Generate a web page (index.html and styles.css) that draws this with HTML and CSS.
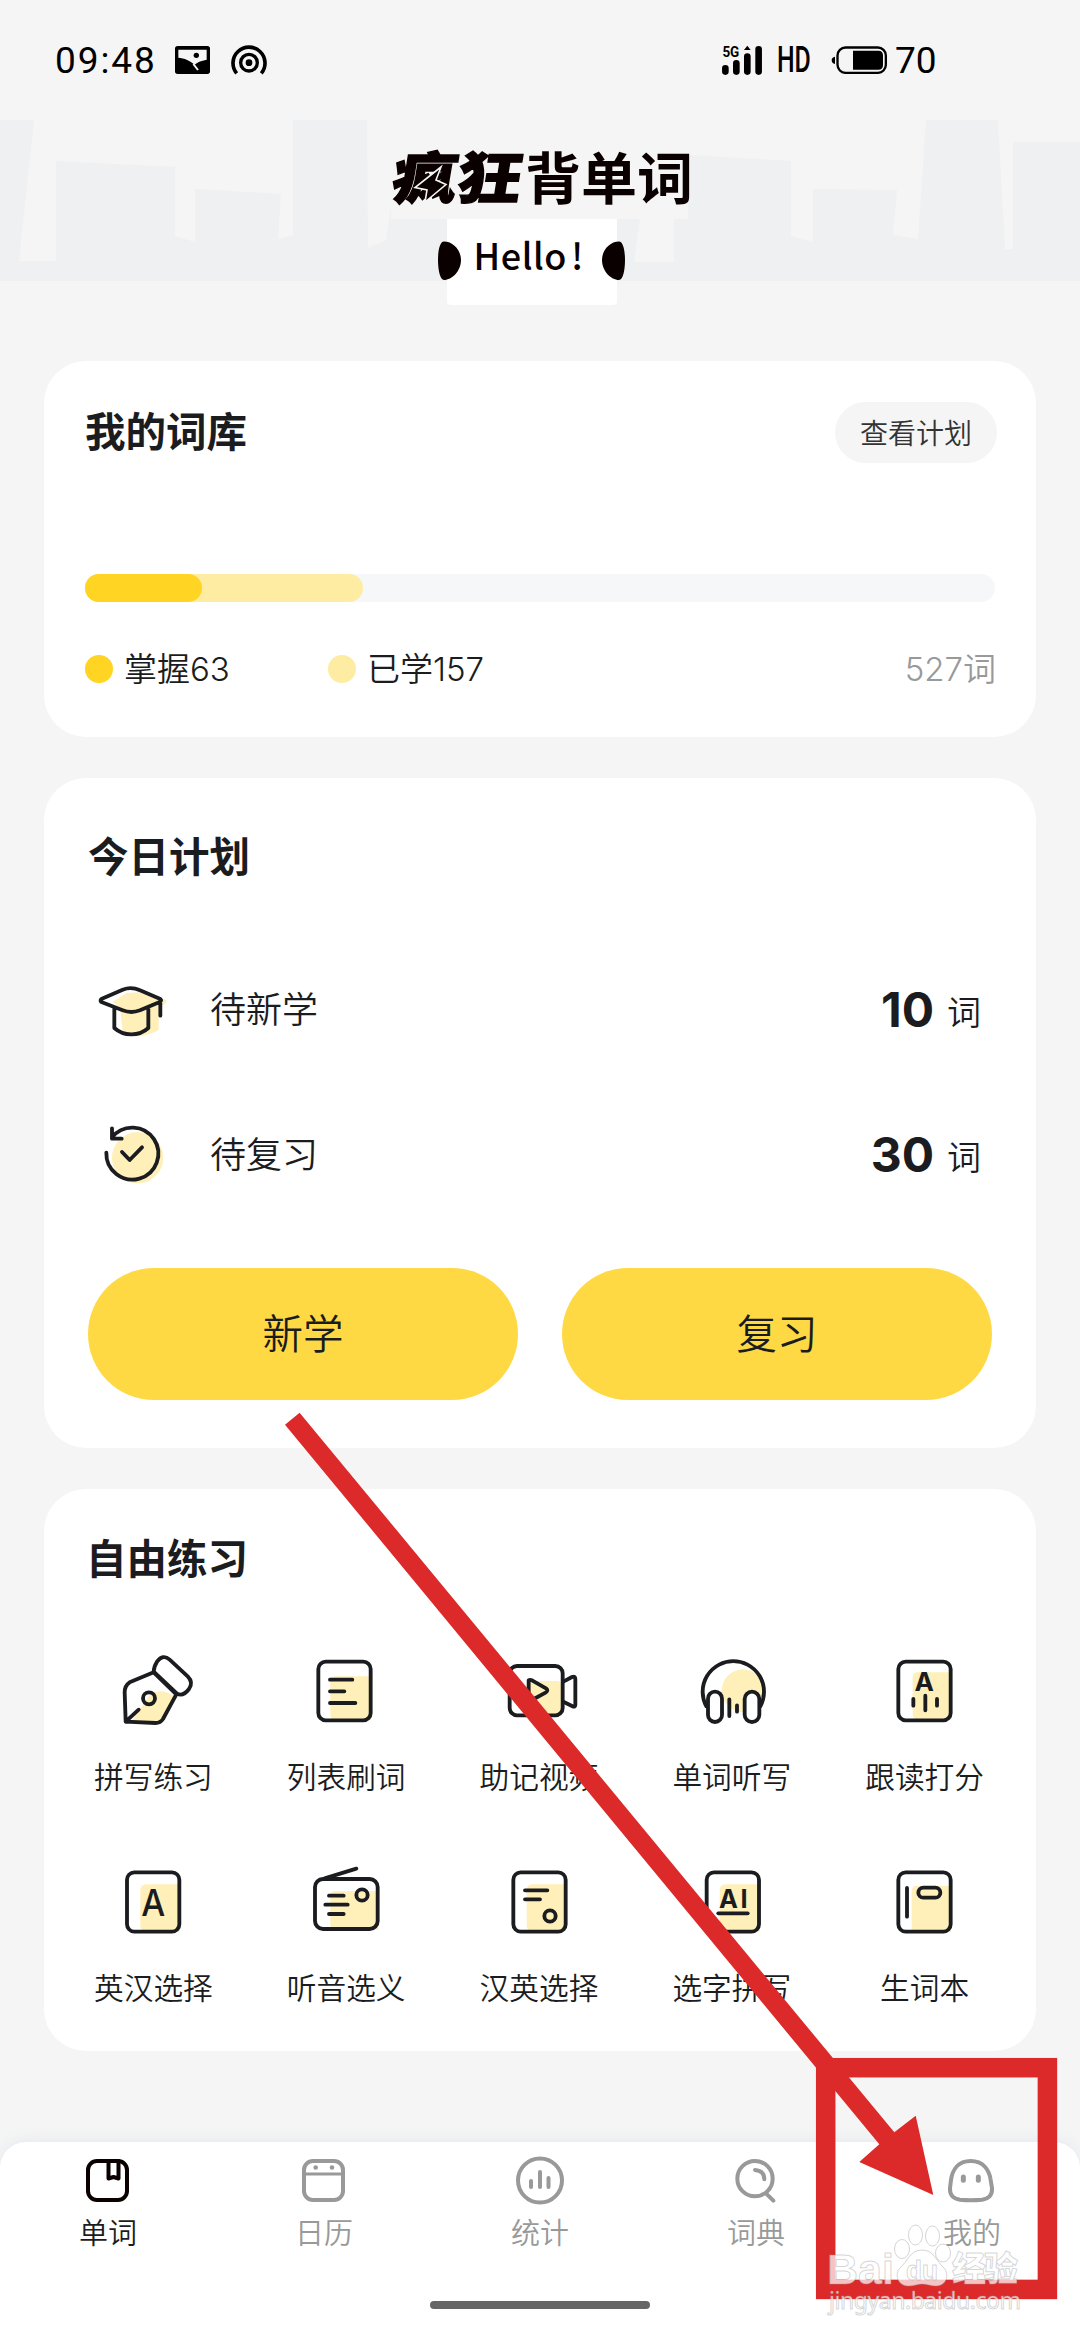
FILE: index.html
```html
<!DOCTYPE html>
<html lang="zh-CN">
<head>
<meta charset="utf-8">
<title>疯狂背单词</title>
<link rel="stylesheet" href="styles.css">
</head>
<body>
<div class="screen">
  <div class="status">
    <span class="clock">09:48</span>
    <svg class="st-image" viewBox="405 78 105 84" width="35" height="28"><path fill-rule="evenodd" d="M413 78H502Q510 78 510 86V154Q510 162 502 162H413Q405 162 405 154V86Q405 78 413 78ZM415 89V113C432 113 452 124 464 134Q474 124 500 119V89Z"/><circle cx="469" cy="106" r="8"/><path d="M460 132L474 150" stroke="#f5f5f5" stroke-width="6"/></svg>
    <svg class="st-cast" viewBox="570 70 114 96" width="38" height="32" fill="none" stroke="#000"><circle cx="627" cy="126" r="10" fill="#000" stroke="none"/><circle cx="627" cy="126" r="25" stroke-width="10"/><path d="M590 158A48 48 0 1 1 664 158" stroke-width="11"/></svg>
    <span class="spacer"></span>
    <svg class="st-signal" viewBox="60 72 126 92" width="42" height="30.600"><text x="64" y="107" class="five" textLength="51" lengthAdjust="spacingAndGlyphs">5G</text><path d="M73 142V152M106 127V152M139 107V152M173 85V152" stroke="#000" stroke-width="20" stroke-linecap="round"/><path d="M139 74L149 87H129Z"/></svg>
    <span class="hd">HD</span>
    <svg class="st-batt" viewBox="384 76 170 86" width="56.700" height="28.700"><rect x="403.500" y="80.500" width="145" height="76" rx="24" fill="none" stroke="#000" stroke-width="7"/><path d="M450 90H526Q540 90 540 104V133Q540 147 526 147H450ZM396 108V130Q386 128 386 119Q386 110 396 108Z"/></svg>
    <span class="pct">70</span>
  </div>

  <svg class="hero" viewBox="0 120 1080 241" width="1080" height="241">
    <g fill="#eff0f2">
      <path d="M0 120H34L19 261H56V161L175 167V236L195 242V189L281 194L278 239L293 235V120H367L368 248L386 240L395 180H688V155L791 161V236L813 242V189L897 190L893 235L918 239L926 120H998L1005 249H1013V142H1080V281H0Z"/>
    </g>
    <path d="M391 130H688V219H391ZM640 219H674V262H634Z" fill="#f5f5f5"/>
    <path d="M447 219H617V301Q617 305 613 305H451Q447 305 447 301Z" fill="#fff"/>
    <path d="M444 241.500C453 241.500 461 250 461 260C461 271 452 280 444 280C440 280 438 270 438 260C438 250 440 241.500 444 241.500ZM619 241.500C610 241.500 602 250 602 260C602 271 611 280 619 280C623 280 625 270 625 260C625 250 623 241.500 619 241.500Z" fill="#0b0000"/>
    <g transform="translate(390 199) skewX(-9)"><text class="logo-heavy" transform="scale(1 .87)" x="0" y="0" textLength="129" lengthAdjust="spacingAndGlyphs">疯狂</text></g>
    <path d="M441 167L415 187.500L427 190L425 202L446 184.500L436 180Z" fill="#0b0000" stroke="#f5f5f5" stroke-width="1.600"/>
    <text class="logo-rest" x="525" y="199" textLength="168">背单词</text>
    <text class="hello" x="473.500" y="270" textLength="93">Hello</text><text class="hello" x="571" y="270">!</text>
  </svg>

  <main class="cards">
    <section class="card library">
      <div class="head"><h2>我的词库</h2><span class="pill">查看计划</span></div>
      <div class="track"><div class="learned"></div><div class="mastered"></div></div>
      <div class="legend">
        <span class="item first"><i class="dot strong"></i>掌握63</span>
        <span class="item"><i class="dot"></i>已学157</span>
        <span class="total">527词</span>
      </div>
    </section>

    <section class="card today">
      <h2>今日计划</h2>
      <div class="plan">
        <svg viewBox="0 27 240 180" width="80" height="60" class="ic"><path class="y" d="M90 110L68 92L110 66L150 64L204 86Q228 80 230 92Q224 104 206 102V176Q184 192 142 196L98 180Z"/><path d="M34 84Q30 88 34 93L98 118Q124 128 150 118L211 92Q215 88 211 84L150 58Q124 46 98 56ZM73 110V171Q94 190 124 190Q154 190 175 171V110M211 90V134"/></svg>
        <span class="name">待新学</span><span class="num">10</span><span class="unit">词</span>
      </div>
      <div class="plan">
        <svg viewBox="0 462 240 180" width="80" height="60" class="ic"><circle class="y" cx="143" cy="560" r="77"/><path d="M49 545A78 78 0 1 0 66 499M66 472V503H95M96 543L119 567L156 529"/></svg>
        <span class="name">待复习</span><span class="num">30</span><span class="unit">词</span>
      </div>
      <div class="buttons"><span class="btn">新学</span><span class="btn">复习</span></div>
    </section>

    <section class="card practice">
      <h2>自由练习</h2>
      <div class="grid">
        <div class="cell"><svg class="ic" viewBox="100 60 240 240"><path class="y" d="M160 264L215 186Q250 174 272 190L288 196L245 270L232 275L150 274Z"/><path d="M222 124L150 154Q135 164 135 184L138 272L228 276Q242 276 250 264L290 190M138 272L177 236M222 124L290 190M222 122Q222 108 232 92Q250 68 270 86L324 136Q342 154 328 174Q310 198 292 188L222 122"/><circle cx="208" cy="202" r="18"/></svg><span>拼写练习</span></div>
        <div class="cell"><svg class="ic" viewBox="679 60 240 240"><path class="y" d="M752 152Q752 136 768 136H874V268H768Q752 268 752 250Z"/><rect x="716" y="92" width="157" height="176" rx="22"/><path d="M751 146H818M751 181H794M751 216H827"/></svg><span>列表刷词</span></div>
        <div class="cell"><svg class="ic" viewBox="1257 60 240 240"><path class="y" d="M1340 165Q1340 150 1356 150H1430Q1445 150 1445 165V254H1356Q1340 254 1340 240Z"/><rect x="1289" y="105" width="159" height="148" rx="22"/><path d="M1346 148Q1350 145 1356 148L1398 172Q1406 178 1398 184L1356 207Q1346 212 1346 202ZM1450 152L1476 138Q1486 134 1486 144V222Q1486 230 1476 225L1450 212"/></svg><span>助记视频</span></div>
        <div class="cell"><svg class="ic" viewBox="395 60 240 240"><circle class="y" cx="548" cy="179" r="64"/><path d="M438 226A92 92 0 1 1 600 226"/><path d="M507 205V255M530 223V242"/><rect class="w" x="443" y="182" width="42" height="91" rx="21"/><rect class="w" x="553" y="182" width="44" height="91" rx="22"/></svg><span>单词听写</span></div>
        <div class="cell"><svg class="ic" viewBox="974 60 240 240"><path class="y" d="M1057 140Q1057 124 1074 124H1174V266H1074Q1057 266 1057 250Z"/><rect x="1014" y="92" width="157" height="176" rx="22"/><path d="M1059 204V224M1095 194V238M1130 204V224"/><text x="1092" y="180" text-anchor="middle" font-size="78">A</text></svg><span>跟读打分</span></div>
        <div class="cell"><svg class="ic" viewBox="100 693 240 240"><path class="y" d="M182 778Q182 760 200 760H300V902H200Q182 902 182 884Z"/><rect x="142" y="724" width="157" height="178" rx="22"/><text x="221" y="855" text-anchor="middle" font-size="112" textLength="72" lengthAdjust="spacingAndGlyphs" class="thin">A</text></svg><span>英汉选择</span></div>
        <div class="cell"><svg class="ic" viewBox="679 693 240 240"><path class="y" d="M752 795Q752 780 768 780H896V896H768Q752 896 752 880Z"/><rect x="706" y="744" width="188" height="150" rx="24"/><path d="M735 742L830 713M748 794H792M737 821H804M748 849H792"/><circle cx="847" cy="792" r="17"/></svg><span>听音选义</span></div>
        <div class="cell"><svg class="ic" viewBox="1257 693 240 240"><path class="y" d="M1340 778Q1340 760 1358 760H1458V900H1358Q1340 900 1340 884Z"/><rect x="1300" y="724" width="157" height="178" rx="22"/><path d="M1335 778H1402M1335 805H1380"/><circle cx="1410" cy="855" r="17"/></svg><span>汉英选择</span></div>
        <div class="cell"><svg class="ic" viewBox="395 693 240 240"><path class="y" d="M478 778Q478 760 496 760H598V902H496Q478 902 478 884Z"/><rect x="439" y="724" width="157" height="178" rx="22"/><path d="M474 847H562"/><text x="476" y="831" font-size="76" textLength="86">AI</text></svg><span>选字拼写</span></div>
        <div class="cell"><svg class="ic" viewBox="974 693 240 240"><path class="y" d="M1054 780Q1054 765 1070 765H1172V902H1054Z"/><rect x="1014" y="724" width="157" height="178" rx="22"/><path d="M1040 771V857"/><rect x="1074" y="770" width="66" height="30" rx="15"/></svg><span>生词本</span></div>
      </div>
    </section>
  </main>

  <nav class="tabs">
    <div class="tab on"><svg viewBox="0 0 60 60"><rect x="10" y="11" width="39" height="39" rx="9"/><path d="M30.500 11V28.500L35.500 27L40.500 28.500V11"/></svg><span>单词</span></div>
    <div class="tab"><svg viewBox="0 0 60 60"><rect x="10" y="11" width="39" height="39" rx="9"/><path d="M10 24H49" stroke-width="3"/><circle class="f" cx="21.700" cy="17.500" r="2.300"/><circle class="f" cx="38" cy="17.500" r="2.300"/></svg><span>日历</span></div>
    <div class="tab"><svg viewBox="0 0 60 60"><circle cx="30" cy="30.500" r="22"/><path d="M21 31V37M30 22V37M38.500 28V37"/></svg><span>统计</span></div>
    <div class="tab"><svg viewBox="498 330 180 180" class="tri"><circle cx="585" cy="416" r="53"/><path d="M618 460L640 482M585 390Q613 392 613 418"/></svg><span>词典</span></div>
    <div class="tab"><svg viewBox="1146 330 180 180" class="tri"><path d="M1232 363C1194 363 1177 390 1173 420L1170 444Q1168 475 1200 479Q1232 482 1266 479Q1298 475 1296 444L1292 420C1288 390 1270 363 1232 363Z"/><path d="M1210 411V421M1255 411V421" stroke-width="15"/></svg><span>我的</span></div>
    <div class="home"></div>
  </nav>

  <svg class="overlay" viewBox="0 0 1080 2340" width="1080" height="2340">
    <rect x="825.700" y="2067.700" width="221.700" height="221.700" fill="none" stroke="#dc2a2a" stroke-width="19.500"/>
    <path d="M299.600 1412.700L894.300 2132.300L915.700 2115.700L933.300 2195L859.300 2162L879.300 2144.300L285 1424.700Z" fill="#dc2a2a"/>
    <g class="mark">
      <text x="827" y="2284" font-size="43" textLength="67" lengthAdjust="spacingAndGlyphs">Bai</text>
      <path d="M922 2250C910 2250 908 2261 900 2268C894 2274 898 2286 908 2286C914 2286 918 2284 922 2284C926 2284 932 2286 936 2286C946 2286 950 2275 944 2268C936 2261 934 2250 922 2250Z"/>
      <ellipse cx="902" cy="2249" rx="7.500" ry="9.500"/><ellipse cx="915.500" cy="2235" rx="7" ry="10"/><ellipse cx="932.500" cy="2236" rx="7" ry="10"/><ellipse cx="943" cy="2253" rx="7.500" ry="9"/>
      <text x="906" y="2280" font-size="28" textLength="32" lengthAdjust="spacingAndGlyphs">du</text>
      <text x="952" y="2281" font-size="34" textLength="66" class="cn">经验</text>
      <text x="829" y="2309" font-size="23" textLength="192" class="url">jingyan.baidu.com</text>
    </g>
  </svg>
</div>
</body>
</html>
```
FILE: styles.css
```css
* { box-sizing: border-box; }
body {
  margin: 0;
  background: #f5f5f5;
  color: #1b1c20;
  font-family: "Noto Sans CJK SC", sans-serif;
  font-weight: 350;
}
.screen {
  position: relative;
  width: 1080px;
  height: 2340px;
  overflow: hidden;
  display: flex;
  flex-direction: column;
}
.status {
  display: flex;
  align-items: center;
  height: 120px;
  padding: 0 143px 0 55px;
  color: #000;
  font-family: Roboto, sans-serif;
  font-size: 37px;
  font-weight: 400;
}
.clock { width: 120px; letter-spacing: 1.9px; }
.st-cast { margin-left: 20px; }
.spacer { flex: 1; }
.st-signal { margin-right: 14px; }
.five { font: 700 42px Roboto, sans-serif; }
.hd { width: 54px; font-weight: 500; font-size: 36px; transform: scaleX(.69); transform-origin: 0 50%; }
.st-batt { margin-right: 7px; }
.pct { width: 42px; }
.hero { display: block; }
.hero text { fill: #0b0000; }
.logo-heavy { font-size: 65px; font-weight: 900; stroke: #0b0000; stroke-width: 1.5; }
.logo-rest { font-size: 56px; font-weight: 700; }
.hello { font-size: 36px; font-weight: 500; }

.cards { display: flex; flex-direction: column; gap: 41px; padding: 0 44px; }
.card { background: #fff; border-radius: 42px; }
h2 { margin: 0; font-size: 40.500px; line-height: 54px; padding-bottom: 6px; font-weight: 700; }

.library { height: 376px; padding: 41px 39px 0 41px; }
.head { display: flex; justify-content: space-between; align-items: center; height: 61px; }
.pill {
  width: 162px;
  height: 61px;
  line-height: 60px;
  border-radius: 31px;
  background: #f5f5f5;
  text-align: center;
  font-size: 28px;
  color: #333;
}
.track {
  display: grid;
  width: 910px;
  height: 28px;
  margin-top: 111px;
  border-radius: 14px;
  background: #f5f7f9;
}
.track div { grid-area: 1 / 1; border-radius: 14px; }
.learned { width: 278px; background: #ffeca3; }
.mastered { width: 117px; background: #ffd422; }
.legend { display: flex; align-items: center; margin-top: 42px; font-family: Inter, "Noto Sans CJK SC", sans-serif; font-size: 33px; line-height: 50px; }
.item { display: flex; align-items: center; gap: 11px; }
.first { width: 243px; }
.dot { width: 28px; height: 28px; border-radius: 50%; background: #ffeca3; }
.strong { background: #ffd422; }
.total { margin-left: auto; margin-right: 1px; color: #999; }

.today { height: 670px; padding: 50px 44px 0; }
.plan { display: flex; align-items: center; height: 60px; }
.plan .ic { margin-left: 2px; }
h2 + .plan { margin: 92px 0 85px; }
.name { flex: 1; margin-left: 40px; padding-bottom: 6px; font-size: 36px; }
.num { margin-right: 13px; font: 700 48px Inter, sans-serif; padding-bottom: 2px; }
.unit { width: 45px; font-size: 34px; }
.buttons { display: flex; gap: 44px; margin-top: 83px; }
.btn { flex: 1; height: 132px; border-radius: 66px; background: #ffd943; text-align: center; font-size: 40.500px; line-height: 127px; }

.practice { height: 562px; padding: 41px 14px 0; }
.practice h2 { padding-left: 28px; }
.grid { display: grid; grid-template-columns: repeat(5, 192.800px); margin-left: -1px; padding-top: 61px; }
.cell { display: flex; flex-direction: column; align-items: center; gap: 23px; height: 211px; font-size: 29.700px; line-height: 44px; }
.cell svg { width: 80px; height: 80px; }
.ic { overflow: visible; fill: none; stroke: #1b1c20; stroke-width: 11.500; stroke-linecap: round; stroke-linejoin: round; flex: none; }
.ic .y { fill: #ffefb8; stroke: none; }
.ic .w { fill: #fff; }
.ic text { fill: #1b1c20; stroke: none; font-family: Inter, sans-serif; font-weight: 700; }
.ic .thin { font-weight: 500; }

.tabs {
  display: flex;
  flex-wrap: wrap;
  align-content: flex-start;
  height: 198px;
  margin-top: auto;
  padding-top: 8px;
  background: #fff;
  border-radius: 26px 26px 0 0;
  box-shadow: 0 -2px 14px rgba(200, 215, 230, .35);
}
.tab { width: 216px; height: 151px; display: flex; flex-direction: column; align-items: center; gap: 1px; color: #999; font-size: 29px; line-height: 40px; }
.tab svg { width: 60px; height: 60px; fill: none; stroke: currentColor; stroke-width: 4; stroke-linecap: round; stroke-linejoin: round; }
.tab svg.tri { stroke-width: 12; }
.tab .f { fill: currentColor; stroke: none; }
.on { color: #1b1c20; }
.on svg { color: #0b0000; }
.home { width: 220px; height: 8px; margin: 0 auto; border-radius: 4px; background: #666; }

.overlay { position: absolute; left: 0; top: 0; }
.mark { fill: rgba(255, 255, 255, .72); stroke: rgba(150, 150, 150, .4); stroke-width: 1; }
.mark text { font-family: "Liberation Sans", sans-serif; font-weight: 700; }
.mark .cn { font-family: "Noto Sans CJK SC", sans-serif; font-weight: 900; }
.mark .url { font-family: "Noto Sans", sans-serif; font-weight: 400; }
```
